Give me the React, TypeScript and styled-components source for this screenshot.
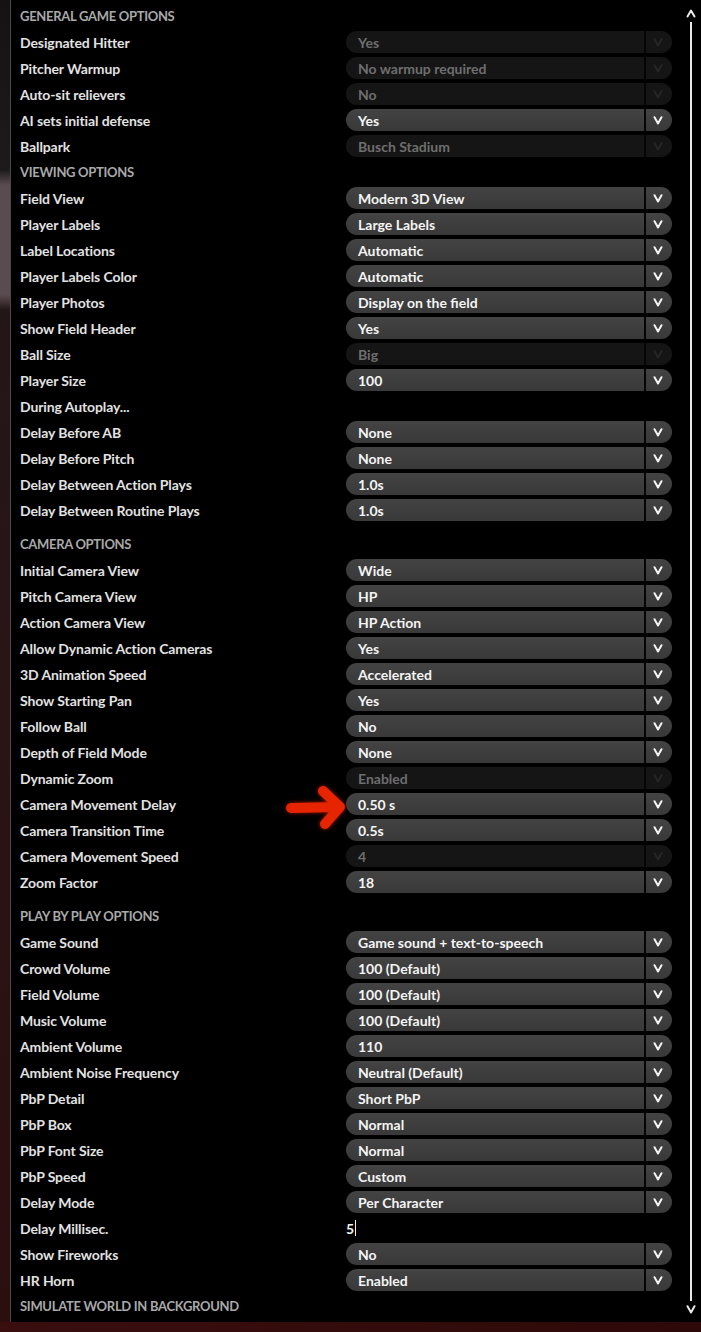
import React from "react";
import styled, { createGlobalStyle } from "styled-components";

const GlobalStyle = createGlobalStyle`
  html, body {
    margin: 0;
    padding: 0;
    background: #000;
  }
  body {
    font-family: Lato, "Noto Sans", sans-serif;
  }
`;

const Screen = styled.div`
  width: 701px;
  height: 1332px;
  display: flex;
  flex-direction: column;
  overflow: hidden;
  background: #2a0808;
`;

const MainRow = styled.div`
  display: flex;
  height: 1322px;
`;

const SideStrip = styled.div`
  width: 10px;
  background: linear-gradient(
    to bottom,
    #141213 0px,
    #1c1a1b 170px,
    #5a4b50 185px,
    #5a4b50 295px,
    #231617 310px,
    #2a1416 700px,
    #2c0e0f 1322px
  );
`;

const Panel = styled.div`
  position: relative;
  flex: 1;
  display: flex;
  background: #000;
  border-left: 1px solid #4a4a4a;
`;

const Content = styled.div`
  flex: 1;
  padding: 3px 8px 0 9px;
`;

const Section = styled.div<{ $gap?: boolean }>`
  margin-top: ${(p) => (p.$gap ? "8px" : "0")};
`;

const Row = styled.div`
  height: 26px;
  display: flex;
  align-items: center;
`;

const Heading = styled.div`
  flex: 1;
  font-size: 13px;
  font-weight: 700;
  color: #a9a9a9;
  letter-spacing: -0.3px;
`;

const Label = styled.div`
  flex: 1;
  font-size: 14px;
  font-weight: 700;
  color: #e2e2e2;
  letter-spacing: -0.1px;
`;

const Select = styled.div<{ $disabled?: boolean }>`
  width: 326px;
  height: 22px;
  display: flex;
  border-radius: 11px;
  overflow: hidden;
  background: ${(p) =>
    p.$disabled
      ? "#151515"
      : "linear-gradient(to bottom, #434343, #393939)"};
`;

const SelectValue = styled.div<{ $disabled?: boolean }>`
  flex: 1;
  display: flex;
  align-items: center;
  padding-left: 12px;
  font-size: 14px;
  font-weight: 700;
  color: ${(p) => (p.$disabled ? "#6e6e6e" : "#f4f4f4")};
`;

const Chevron = styled.div<{ $disabled?: boolean }>`
  width: 23px;
  display: flex;
  align-items: center;
  justify-content: center;
  border-left: 2px solid #050505;
  color: ${(p) => (p.$disabled ? "#262626" : "#f4f4f4")};
  padding-right: 3px;
`;

const TextInput = styled.div`
  width: 326px;
  display: flex;
  align-items: center;
  font-size: 14px;
  font-weight: 700;
  color: #f4f4f4;
`;

const Caret = styled.span`
  display: inline-block;
  width: 1px;
  height: 16px;
  background: #f0f0f0;
  margin-left: 1px;
`;

const ScrollBar = styled.div`
  width: 21px;
  display: flex;
  flex-direction: column;
  align-items: center;
  padding: 9px 0 8px;
  box-sizing: border-box;
  color: #e8e8e8;
`;

const ScrollTrack = styled.div`
  flex: 1;
  width: 2px;
  background: #e8e8e8;
  margin: 4px 0;
`;

const Arrow = styled.svg`
  position: absolute;
  left: 270px;
  top: 783px;
  filter: drop-shadow(0 0 2px rgba(255, 40, 0, 0.6));
`;

const BottomStrip = styled.div`
  flex: 1;
  background: linear-gradient(to right, #3a0e0e, #2e0909);
`;

const ChevronIcon = ({ up }: { up?: boolean }) => (
  <svg width="10" height="9" viewBox="0 0 10 9">
    <polyline
      points={up ? "1.5,7.5 5,1.5 8.5,7.5" : "1.5,1.2 5,7.5 8.5,1.2"}
      fill="none"
      stroke="currentColor"
      strokeWidth="2"
      strokeLinecap="round"
      strokeLinejoin="round"
    />
  </svg>
);

type Item =
  | { label: string; value: string; disabled?: boolean }
  | { label: string; text: string }
  | { label: string };

type SectionData = { title: string; gap?: boolean; items: Item[] };

const sections: SectionData[] = [
  {
    title: "GENERAL GAME OPTIONS",
    items: [
      { label: "Designated Hitter", value: "Yes", disabled: true },
      { label: "Pitcher Warmup", value: "No warmup required", disabled: true },
      { label: "Auto-sit relievers", value: "No", disabled: true },
      { label: "AI sets initial defense", value: "Yes" },
      { label: "Ballpark", value: "Busch Stadium", disabled: true },
    ],
  },
  {
    title: "VIEWING OPTIONS",
    items: [
      { label: "Field View", value: "Modern 3D View" },
      { label: "Player Labels", value: "Large Labels" },
      { label: "Label Locations", value: "Automatic" },
      { label: "Player Labels Color", value: "Automatic" },
      { label: "Player Photos", value: "Display on the field" },
      { label: "Show Field Header", value: "Yes" },
      { label: "Ball Size", value: "Big", disabled: true },
      { label: "Player Size", value: "100" },
      { label: "During Autoplay..." },
      { label: "Delay Before AB", value: "None" },
      { label: "Delay Before Pitch", value: "None" },
      { label: "Delay Between Action Plays", value: "1.0s" },
      { label: "Delay Between Routine Plays", value: "1.0s" },
    ],
  },
  {
    title: "CAMERA OPTIONS",
    gap: true,
    items: [
      { label: "Initial Camera View", value: "Wide" },
      { label: "Pitch Camera View", value: "HP" },
      { label: "Action Camera View", value: "HP Action" },
      { label: "Allow Dynamic Action Cameras", value: "Yes" },
      { label: "3D Animation Speed", value: "Accelerated" },
      { label: "Show Starting Pan", value: "Yes" },
      { label: "Follow Ball", value: "No" },
      { label: "Depth of Field Mode", value: "None" },
      { label: "Dynamic Zoom", value: "Enabled", disabled: true },
      { label: "Camera Movement Delay", value: "0.50 s" },
      { label: "Camera Transition Time", value: "0.5s" },
      { label: "Camera Movement Speed", value: "4", disabled: true },
      { label: "Zoom Factor", value: "18" },
    ],
  },
  {
    title: "PLAY BY PLAY OPTIONS",
    gap: true,
    items: [
      { label: "Game Sound", value: "Game sound + text-to-speech" },
      { label: "Crowd Volume", value: "100 (Default)" },
      { label: "Field Volume", value: "100 (Default)" },
      { label: "Music Volume", value: "100 (Default)" },
      { label: "Ambient Volume", value: "110" },
      { label: "Ambient Noise Frequency", value: "Neutral (Default)" },
      { label: "PbP Detail", value: "Short PbP" },
      { label: "PbP Box", value: "Normal" },
      { label: "PbP Font Size", value: "Normal" },
      { label: "PbP Speed", value: "Custom" },
      { label: "Delay Mode", value: "Per Character" },
      { label: "Delay Millisec.", text: "5" },
      { label: "Show Fireworks", value: "No" },
      { label: "HR Horn", value: "Enabled" },
    ],
  },
  {
    title: "SIMULATE WORLD IN BACKGROUND",
    items: [],
  },
];

const OptionRow = ({ item }: { item: Item }) => (
  <Row>
    <Label>{item.label}</Label>
    {"value" in item && (
      <Select $disabled={item.disabled}>
        <SelectValue $disabled={item.disabled}>{item.value}</SelectValue>
        <Chevron $disabled={item.disabled}>
          <ChevronIcon />
        </Chevron>
      </Select>
    )}
    {"text" in item && (
      <TextInput>
        {item.text}
        <Caret />
      </TextInput>
    )}
  </Row>
);

export default function App() {
  return (
    <>
      <GlobalStyle />
      <Screen>
        <MainRow>
          <SideStrip />
          <Panel>
            <Content>
              {sections.map((s) => (
                <Section key={s.title} $gap={s.gap}>
                  <Row>
                    <Heading>{s.title}</Heading>
                  </Row>
                  {s.items.map((it) => (
                    <OptionRow key={it.label} item={it} />
                  ))}
                </Section>
              ))}
            </Content>
            <ScrollBar>
              <ChevronIcon up />
              <ScrollTrack />
              <ChevronIcon />
            </ScrollBar>
            <Arrow width="72" height="50" viewBox="0 0 72 50">
              <g
                fill="none"
                stroke="#e62400"
                strokeWidth="10"
                strokeLinecap="round"
                strokeLinejoin="round"
              >
                <path d="M10 25 L58 24" />
                <path d="M42 8 L59 24 L44 41" />
              </g>
            </Arrow>
          </Panel>
        </MainRow>
        <BottomStrip />
      </Screen>
    </>
  );
}
